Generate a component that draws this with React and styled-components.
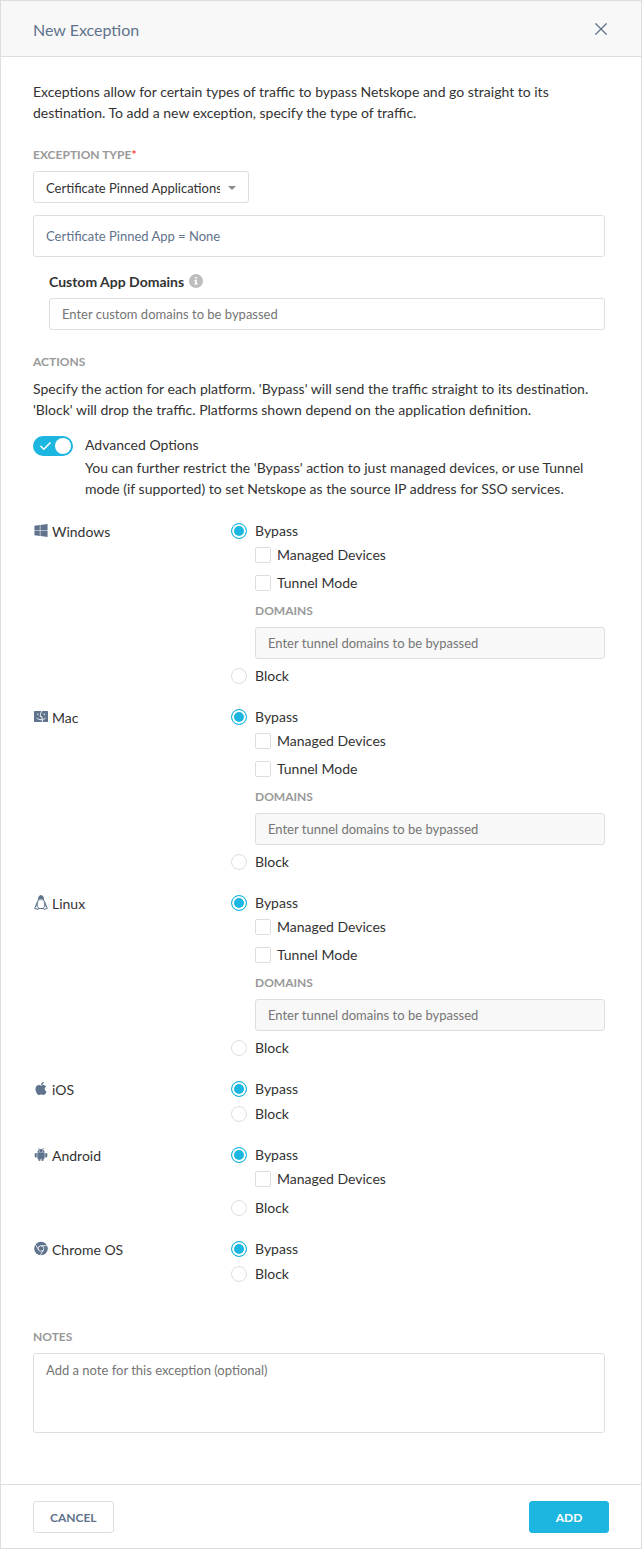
import React from "react";
import styled, { createGlobalStyle, css } from "styled-components";
import { FaWindows, FaApple } from "react-icons/fa";

const color = {
  text: "#333333",
  slate: "#5f738c",
  muted: "#999999",
  placeholder: "#757575",
  line: "#dedede",
  panel: "#f8f8f8",
  accent: "#1cb6e1",
  danger: "#ff3b3b",
};

const GlobalStyle = createGlobalStyle`
  *, *::before, *::after { box-sizing: border-box; }
  body {
    margin: 0;
    background: #ffffff;
    color: ${color.text};
    font: 14px/21px Lato, "Liberation Sans", sans-serif;
  }
  button, input, select, textarea { font-family: inherit; margin: 0; }
`;

const Dialog = styled.form`
  display: flex;
  flex-direction: column;
  min-height: 100vh;
  border: 1px solid ${color.line};
`;

const Header = styled.header`
  display: flex;
  align-items: center;
  justify-content: space-between;
  height: 56px;
  padding: 0 32px;
  background: ${color.panel};
  border-bottom: 1px solid ${color.line};
`;

const Title = styled.h1`
  margin: 0;
  padding-top: 2px;
  color: ${color.slate};
  font-size: 16px;
  font-weight: 400;
`;

const CloseButton = styled.button`
  display: flex;
  padding: 2px;
  border: 0;
  background: none;
  color: ${color.slate};
`;

const Body = styled.main`
  flex: 1;
  padding: 24px 36px 51px 32px;
`;

const Text = styled.p`
  margin: 0;
`;

const SectionLabel = styled.span`
  display: block;
  margin: 0;
  color: ${color.muted};
  font-size: 12px;
  font-weight: 700;
  line-height: 20px;
  text-transform: uppercase;
`;

const SectionTitle = styled(SectionLabel)`
  margin-bottom: 6px;
`;

const Section = styled.section`
  margin-top: ${(p) => p.$gap}px;
`;

const Required = styled.span`
  color: ${color.danger};
`;

const fieldFrame = css`
  display: block;
  border: 1px solid ${color.line};
  border-radius: 3px;
  padding: 0 12px;
  font-size: 13px;
  background-color: #ffffff;
`;

const SelectWrap = styled.div`
  display: grid;
  align-items: center;
  width: 216px;
  margin-top: 6px;
  > * { grid-area: 1 / 1; }
  svg { justify-self: end; margin-right: 13px; pointer-events: none; }
`;

const Select = styled.select`
  ${fieldFrame}
  appearance: none;
  width: 100%;
  height: 32px;
  padding: 2px 28px 0 12px;
  color: ${color.text};
`;

const AppPicker = styled.button`
  ${fieldFrame}
  width: 100%;
  height: 42px;
  margin-top: 12px;
  color: ${color.slate};
  text-align: left;
`;

const Input = styled.input`
  ${fieldFrame}
  width: 100%;
  height: 32px;
  margin-top: 6px;
  &::placeholder { color: ${color.placeholder}; opacity: 1; }
  &:disabled { background-color: ${color.panel}; }
`;

const TextArea = styled.textarea`
  ${fieldFrame}
  width: 100%;
  height: 80px;
  margin-top: 6px;
  padding: 8px 12px;
  line-height: 16px;
  resize: none;
  &::placeholder { color: ${color.placeholder}; opacity: 1; }
`;

const CustomDomains = styled.div`
  margin: 15px 0 0 16px;
`;

const CustomLabel = styled.label`
  display: flex;
  align-items: center;
  gap: 5px;
  height: 20px;
  font-weight: 700;
  line-height: 20px;
  svg { margin-bottom: 2px; }
`;

const Advanced = styled.label`
  display: grid;
  grid-template-columns: 40px 1fr;
  column-gap: 12px;
  row-gap: 2px;
  margin-top: 14px;
`;

const Switch = styled.span`
  display: grid;
  align-items: center;
  width: 40px;
  height: 19px;
  margin-top: 2px;
  > * { grid-area: 1 / 1; }
  svg { margin-left: 6px; pointer-events: none; }
`;

const SwitchInput = styled.input`
  appearance: none;
  align-self: start;
  width: 40px;
  height: 20px;
  padding: 2px;
  border-radius: 10px;
  background: #c4c4c4;
  &::after {
    content: "";
    display: block;
    width: 16px;
    height: 16px;
    border-radius: 50%;
    background: #ffffff;
  }
  &:checked { background: ${color.accent}; }
  &:checked::after { margin-left: auto; }
`;

const AdvancedText = styled(Text)`
  grid-column: 2;
`;

const Platforms = styled.div`
  display: flex;
  flex-direction: column;
  gap: 21px;
  margin-top: 22px;
`;

const Platform = styled.div`
  display: grid;
  grid-template-columns: 198px 1fr;
  align-items: start;
`;

const PlatformName = styled.div`
  display: flex;
  align-items: center;
  gap: 4px;
  height: 21px;
  padding-left: 1px;
  svg { width: 14px; height: 15px; color: ${color.slate}; flex: none; margin-bottom: 2px; }
`;

const RadioRow = styled.label`
  display: flex;
  align-items: center;
  gap: 8px;
  width: fit-content;
  height: 20px;
  margin-top: ${(p) => p.$gap || 0}px;
  line-height: 20px;
`;

const Radio = styled.input`
  appearance: none;
  width: 16px;
  height: 16px;
  border: 1px solid ${color.line};
  border-radius: 50%;
  background: #ffffff;
  &:checked {
    border-color: ${color.accent};
    background: ${color.accent};
    box-shadow: inset 0 0 0 2px #ffffff;
  }
`;

const Nested = styled.div`
  margin-left: 24px;
`;

const CheckRow = styled.label`
  display: flex;
  align-items: center;
  gap: 6px;
  width: fit-content;
  height: 28px;
  line-height: 20px;
`;

const Checkbox = styled.input`
  appearance: none;
  width: 16px;
  height: 16px;
  border: 1px solid ${color.line};
  border-radius: 2px;
  background: #ffffff;
  &:checked { background: ${color.accent}; border-color: ${color.accent}; }
`;

const DomainField = styled.label`
  display: block;
  padding: 4px 0 2px;
`;

const Footer = styled.footer`
  display: flex;
  justify-content: space-between;
  padding: 16px 32px 15px;
  border-top: 1px solid ${color.line};
`;

const Button = styled.button`
  min-width: 80px;
  height: 32px;
  padding: 1px 16px 0;
  border: 1px solid ${(p) => (p.$primary ? color.accent : color.line)};
  border-radius: 3px;
  background: ${(p) => (p.$primary ? color.accent : "#ffffff")};
  color: ${(p) => (p.$primary ? "#ffffff" : color.slate)};
  font-size: 12px;
  font-weight: 700;
`;

const CloseIcon = () => (
  <svg width="12" height="12" viewBox="0 0 12 12" fill="none" stroke="currentColor" strokeWidth="1.3" aria-hidden="true">
    <path d="M.4.4l11.200 11.200M11.600.4L.4 11.600" />
  </svg>
);

const InfoIcon = () => (
  <svg width="14" height="14" viewBox="0 0 14 14" aria-hidden="true">
    <circle cx="7" cy="7" r="7" fill="#bdbdbd" />
    <path d="M6.2 3h1.7v1.6H6.2zM5.4 5.8h2.5v3.5h.8v1.1H5.3V9.3h.9V6.9h-.8z" fill="#fff" />
  </svg>
);

const CaretIcon = () => (
  <svg width="8" height="6" viewBox="0 -2 8 6" aria-hidden="true">
    <path d="M0 0h8L4 4z" fill="#8c8c8c" />
  </svg>
);

const TickIcon = () => (
  <svg width="13" height="10" viewBox="0 0 13 10" fill="none" stroke="#fff" strokeWidth="1.6" aria-hidden="true">
    <path d="M1.5 5l3.3 3.2L11.5 1.5" />
  </svg>
);

const FinderIcon = () => (
  <svg viewBox="0 0 14 14" aria-hidden="true">
    <rect x="0" y="1.5" width="14" height="11" rx=".6" fill="currentColor" />
    <g fill="none" stroke="#fff" strokeWidth=".9">
      <path d="M3.8 4v1.7M10.3 4v1.7M7.9 1.5C6.6 3.3 6.3 5.2 6.3 7.2H8c-.1 2 .1 3.7.7 5.3" />
      <path d="M2.600 8.500c2.400 2.300 6.500 2.300 9 0" />
    </g>
  </svg>
);

const LinuxIcon = () => (
  <svg viewBox="0.600 0 14 15" fill="none" stroke="currentColor" strokeWidth="1" aria-hidden="true">
    <path d="M5.2 3.700C5.200 1.800 6 .7 7.600.7s2.400 1.100 2.400 3c0 2.500 2.700 4 2.500 7.400M5.200 3.700c0 2.500-2.700 4-2.500 7.400M5.600 13.500h4" />
    <path d="M5.200 2.600C5.400 1.300 6.400.6 7.600.6s2.200.7 2.400 2l.2 2.700H5z" fill="currentColor" stroke="none" />
    <path d="M6.200 4.300l1.400 1L9 4.300" stroke="#fff" strokeWidth=".9" />
    <path d="M2.600 10.300l2.800 2.800-.7 1.300-3.400-.9zM12.600 10.300l-2.800 2.800.7 1.300 3.400-.9z" fill="#fff" />
    <path d="M4.700 7.200c-.8 1.300-.9 2.400-.5 3.600M10.500 7.200c.8 1.300.9 2.400.5 3.600" />
  </svg>
);

const AndroidIcon = () => (
  <svg viewBox="0.500 0.500 14 15" fill="currentColor" aria-hidden="true">
    <path d="M3.9 6.200C4.100 4 5.500 2.600 7.500 2.600s3.400 1.400 3.600 3.600z" />
    <path d="M5 1.400l1 1.600M10 1.400L9 3" stroke="currentColor" strokeWidth=".7" />
    <circle cx="5.900" cy="4.600" r=".5" fill="#fff" />
    <circle cx="9.100" cy="4.600" r=".5" fill="#fff" />
    <path d="M3.800 6.600h7.400v4.800c0 .5-.3.8-.8.8H4.600c-.5 0-.8-.3-.8-.8z" />
    <rect x="1.200" y="6.400" width="2.100" height="4.600" rx="1" />
    <rect x="11.700" y="6.400" width="2.100" height="4.600" rx="1" />
    <rect x="4.900" y="10" width="2.100" height="4.600" rx="1" />
    <rect x="8" y="10" width="2.100" height="4.600" rx="1" />
  </svg>
);

const ChromeIcon = () => (
  <svg viewBox="0 0 14 14" aria-hidden="true">
    <circle cx="7" cy="7" r="6.8" fill="currentColor" />
    <g fill="none" stroke="#fff" strokeWidth=".8">
      <circle cx="7" cy="7" r="2.8" />
      <path d="M7 4.2h6.2M4.6 8.4L1.5 3.2M9.4 8.4l-3.1 5.3" />
    </g>
  </svg>
);

const platforms = [
  { id: "windows", name: "Windows", Icon: FaWindows, managed: true, tunnel: true },
  { id: "mac", name: "Mac", Icon: FinderIcon, managed: true, tunnel: true },
  { id: "linux", name: "Linux", Icon: LinuxIcon, managed: true, tunnel: true },
  { id: "ios", name: "iOS", Icon: FaApple },
  { id: "android", name: "Android", Icon: AndroidIcon, managed: true },
  { id: "chromeos", name: "Chrome OS", Icon: ChromeIcon },
];

function PlatformActions({ id, name, Icon, managed, tunnel }) {
  return (
    <Platform role="radiogroup" aria-labelledby={`${id}-name`}>
      <PlatformName id={`${id}-name`}>
        <Icon />
        {name}
      </PlatformName>
      <div>
        <RadioRow>
          <Radio type="radio" name={id} value="bypass" defaultChecked />
          Bypass
        </RadioRow>
        {managed && (
          <Nested>
            <CheckRow>
              <Checkbox type="checkbox" />
              Managed Devices
            </CheckRow>
            {tunnel && (
              <>
                <CheckRow>
                  <Checkbox type="checkbox" />
                  Tunnel Mode
                </CheckRow>
                <DomainField>
                  <SectionLabel>Domains</SectionLabel>
                  <Input disabled placeholder="Enter tunnel domains to be bypassed" />
                </DomainField>
              </>
            )}
          </Nested>
        )}
        <RadioRow $gap={5}>
          <Radio type="radio" name={id} value="block" />
          Block
        </RadioRow>
      </div>
    </Platform>
  );
}

export default function App() {
  return (
    <Dialog onSubmit={(e) => e.preventDefault()}>
      <GlobalStyle />
      <Header>
        <Title>New Exception</Title>
        <CloseButton type="button" aria-label="Close">
          <CloseIcon />
        </CloseButton>
      </Header>
      <Body>
        <Text>
          Exceptions allow for certain types of traffic to bypass Netskope and go straight to its destination. To add a
          new exception, specify the type of traffic.
        </Text>

        <Section $gap={22}>
          <SectionLabel as="label" htmlFor="exception-type">
            Exception type<Required>*</Required>
          </SectionLabel>
          <SelectWrap>
            <Select id="exception-type">
              <option>Certificate Pinned Applications</option>
            </Select>
            <CaretIcon />
          </SelectWrap>
          <AppPicker type="button">Certificate Pinned App = None</AppPicker>
          <CustomDomains>
            <CustomLabel htmlFor="custom-domains">
              Custom App Domains
              <InfoIcon />
            </CustomLabel>
            <Input id="custom-domains" placeholder="Enter custom domains to be bypassed" />
          </CustomDomains>
        </Section>

        <Section $gap={22}>
          <SectionTitle as="h2">Actions</SectionTitle>
          <Text>
            Specify the action for each platform. 'Bypass' will send the traffic straight to its destination. 'Block'
            will drop the traffic. Platforms shown depend on the application definition.
          </Text>
          <Advanced>
            <Switch>
              <SwitchInput type="checkbox" role="switch" defaultChecked />
              <TickIcon />
            </Switch>
            <span>Advanced Options</span>
            <AdvancedText as="span">
              You can further restrict the 'Bypass' action to just managed devices, or use Tunnel mode (if supported) to
              set Netskope as the source IP address for SSO services.
            </AdvancedText>
          </Advanced>
          <Platforms>
            {platforms.map((p) => (
              <PlatformActions key={p.id} {...p} />
            ))}
          </Platforms>
        </Section>

        <Section $gap={43}>
          <SectionLabel as="label" htmlFor="notes">
            Notes
          </SectionLabel>
          <TextArea id="notes" placeholder="Add a note for this exception (optional)" />
        </Section>
      </Body>
      <Footer>
        <Button type="button">CANCEL</Button>
        <Button type="submit" $primary>
          ADD
        </Button>
      </Footer>
    </Dialog>
  );
}
